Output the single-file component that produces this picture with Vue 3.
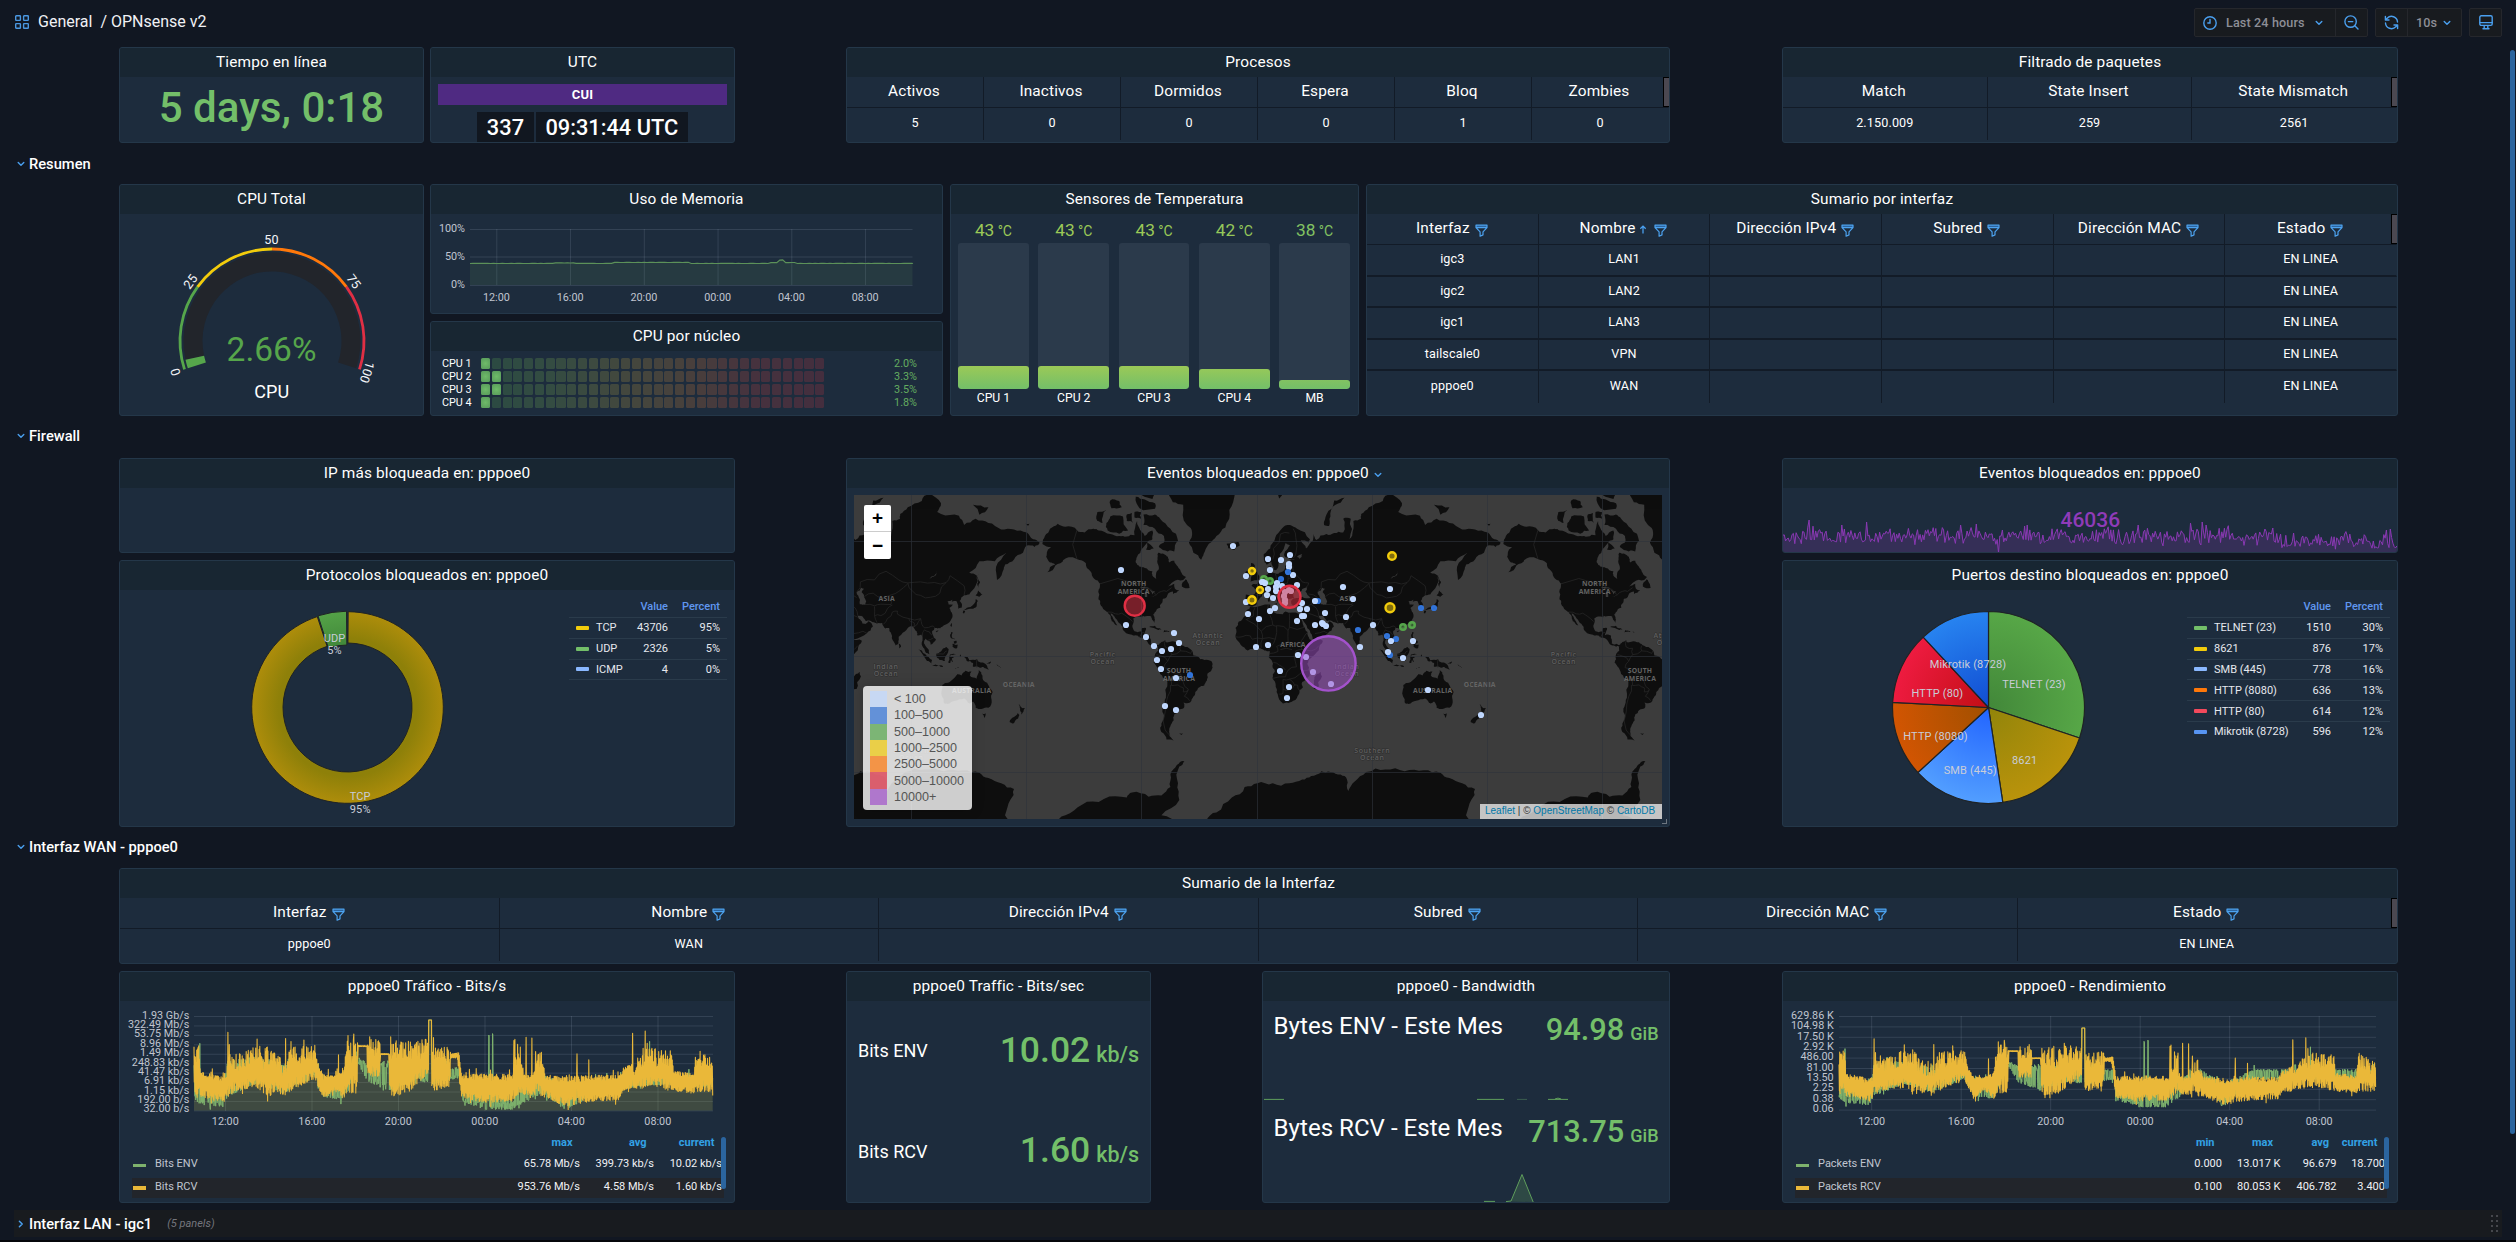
<script setup>
// Deterministic pseudo random generator so every chart renders identically
const rng = (seed) => () => {
  seed = (seed + 0x6d2b79f5) | 0
  let t = Math.imul(seed ^ (seed >>> 15), 1 | seed)
  t = (t + Math.imul(t ^ (t >>> 7), 61 | t)) ^ t
  return ((t ^ (t >>> 14)) >>> 0) / 4294967296
}
const f1 = (n) => n.toFixed(1)

/* ---------- tables ---------- */
const procesos = [['Activos', 5], ['Inactivos', 0], ['Dormidos', 0], ['Espera', 0], ['Bloq', 1], ['Zombies', 0]]
const filtrado = [['Match', '2.150.009'], ['State Insert', '259'], ['State Mismatch', '2561']]
const ifaceCols = ['Interfaz', 'Nombre', 'Dirección IPv4', 'Subred', 'Dirección MAC', 'Estado']
const ifaces = [
  ['igc3', 'LAN1', '', '', '', 'EN LINEA'],
  ['igc2', 'LAN2', '', '', '', 'EN LINEA'],
  ['igc1', 'LAN3', '', '', '', 'EN LINEA'],
  ['tailscale0', 'VPN', '', '', '', 'EN LINEA'],
  ['pppoe0', 'WAN', '', '', '', 'EN LINEA'],
]
const wanRow = ['pppoe0', 'WAN', '', '', '', 'EN LINEA']

/* ---------- arcs ---------- */
const polar = (cx, cy, r, deg) => {
  const a = (deg * Math.PI) / 180
  return [cx + r * Math.sin(a), cy - r * Math.cos(a)]
}
const slice = (cx, cy, r0, r1, a0, a1) => {
  const big = a1 - a0 > 180 ? 1 : 0
  const p = (r, a) => polar(cx, cy, r, a).map((n) => n.toFixed(2)).join(' ')
  const outer = `M${p(r1, a0)}A${r1} ${r1} 0 ${big} 1 ${p(r1, a1)}`
  return r0 ? `${outer}L${p(r0, a1)}A${r0} ${r0} 0 ${big} 0 ${p(r0, a0)}Z` : `${outer}L${cx} ${cy}Z`
}
const gaugeRing = [
  ['#56a64b', -108, -54], ['#f2cc0c', -54, 0], ['#ff780a', 0, 54], ['#e02f44', 54, 108],
].map(([c, a, b]) => ({ c, d: slice(272, 341, 90.6, 93.4, a, b) }))
const gaugeBand = slice(272, 341, 69.5, 88.5, -102.2, 108)
const gaugeValue = slice(272, 341, 69.5, 88.5, -108, -102.2)

/* ---------- memory ---------- */
const hours = ['12:00', '16:00', '20:00', '00:00', '04:00', '08:00']
const memX = (i) => 496.8 + i * 73.75
const memLine = (() => {
  const r = rng(4)
  const pts = []
  for (let x = 470; x <= 912.6; x += 2.95) {
    let y = 263.4
    if (x > 555 && x < 575) y = 262.9
    if (x > 614 && x < 690) y = 262.4
    if (x > 770 && x < 795) y = 262.6
    if (x > 778 && x < 783) y = 260
    pts.push(`${f1(x)} ${f1(y + (r() - 0.5) * 0.3)}`)
  }
  pts.push('912.5 263.2')
  return pts.join('L')
})()

/* ---------- CPU per core ---------- */
const cores = [['CPU 1', 1, '2.0%'], ['CPU 2', 2, '3.3%'], ['CPU 3', 2, '3.5%'], ['CPU 4', 1, '1.8%']]
const cellColor = (i) => {
  const stops = [[43, 74, 66], [52, 76, 66], [66, 72, 62], [72, 64, 60], [70, 50, 62], [68, 46, 62]]
  const t = (i / 31) * 5
  const k = Math.min(4, Math.floor(t))
  return `rgb(${stops[k].map((v, j) => Math.round(v + (stops[k + 1][j] - v) * (t - k))).join(',')})`
}

/* ---------- temperature ---------- */
const temps = [
  ['CPU 1', 43, 23, '#9bc957'], ['CPU 2', 43, 23, '#9bc957'], ['CPU 3', 43, 23, '#9bc957'],
  ['CPU 4', 42, 20, '#95c85a'], ['MB', 38, 9, '#82c262'],
]

/* ---------- pies ---------- */
const protoLegend = [['TCP', 43706, '95%', '#f2cc0c'], ['UDP', 2326, '5%', '#73bf69'], ['ICMP', 4, '0%', '#8ab8ff']]
const tcpPath = slice(347.5, 707.5, 64.5, 95.8, 0.4, 341.6)
const udpPath = slice(347.5, 707.5, 62.5, 96.3, 342.2, 359.4)
const ports = [
  ['TELNET (23)', 1510, '30%', '#73bf69', '#43893a', '#57a747', 2034, 684.3],
  ['8621', 876, '17%', '#f2cc0c', '#93850a', '#ba930b', 2024.7, 760.3],
  ['SMB (445)', 778, '16%', '#8ab8ff', '#2467ff', '#529eff', 1970.2, 770.3],
  ['HTTP (8080)', 636, '13%', '#ff780a', '#a35000', '#d25502', 1935.5, 736.3],
  ['HTTP (80)', 614, '12%', '#f2495c', '#c40f17', '#ee1b40', 1937.4, 693.3],
  ['Mikrotik (8728)', 596, '12%', '#5794f2', '#124fd3', '#2783f0', 1968, 664.3],
]
const portSlices = (() => {
  const total = ports.reduce((s, p) => s + p[1], 0)
  let a = 0
  return ports.map((p, i) => {
    const b = a + (p[1] / total) * 360
    const s = { d: slice(1988.5, 707.5, 0, 96, a, b), inner: p[4], outer: p[5], id: `port${i}`, text: p[0], x: p[6], y: p[7] }
    a = b
    return s
  })
})()

/* ---------- blocked events sparkline ---------- */
const events = (() => {
  const r = rng(21)
  const pts = []
  for (let i = 0; i <= 470; i++) {
    const x = 1783 + i * 1.306
    let y = 536.2 + Math.sin(i / 5) * 1.6
    if (i > 345) y += Math.min(5.5, (i - 345) / 14)
    y += (r() - 0.5) * 13 + (r() - 0.5) * 5
    if (r() > 0.95) y -= 5
    pts.push([x, y])
  }
  const peaks = { 20: 520, 45: 525, 64: 522, 136: 525, 148: 524, 165: 552.5, 187: 525, 272: 525, 321: 522, 324: 525, 462: 530, 465: 529, 469: 548, 470: 546 }
  Object.entries(peaks).forEach(([k, v]) => { pts[k][1] = v })
  return pts.map((p) => `${f1(p[0])} ${f1(p[1])}`).join('L')
})()

/* ---------- traffic charts: [position, top, bottom] envelopes ---------- */
const envRcv = [
  [0, 650, 800], [12, 645, 790], [14, 725, 800], [62, 742, 818], [68, 732, 800], [70, 650, 800], [90, 672, 780], [130, 645, 772],
  [150, 650, 800], [175, 680, 790], [184, 690, 800], [200, 650, 782], [250, 645, 745], [256, 700, 770], [268, 735, 810],
  [290, 738, 780], [308, 722, 812], [315, 630, 790], [336, 622, 790], [339, 647, 650], [357, 647, 650], [358, 628, 740], [383, 625, 740],
  [385, 671, 674], [402, 671, 674], [404, 632, 800], [440, 632, 790], [480, 628, 735], [494, 640, 785], [505, 655, 778], [528, 650, 770], [530, 672, 684], [543, 668, 684], [547, 668, 730],
  [552, 734, 805], [600, 732, 818], [660, 734, 814], [669, 650, 795], [676, 650, 785], [680, 735, 795], [700, 735, 795], [711, 660, 785], [717, 665, 805],
  [725, 735, 800], [765, 740, 830], [820, 736, 814], [878, 736, 810], [884, 716, 785], [905, 698, 785], [908, 733, 775], [926, 655, 775], [945, 655, 765],
  [987, 662, 785], [990, 722, 785], [1032, 732, 790], [1036, 655, 785], [1055, 670, 785], [1071, 690, 785],
]
const envEnv = [
  [0, 680, 808], [14, 745, 825], [60, 755, 832], [70, 690, 800], [130, 680, 760], [185, 705, 790], [250, 700, 742], [268, 738, 802], [305, 740, 810],
  [320, 690, 780], [338, 680, 700], [358, 700, 755], [404, 690, 785], [460, 702, 750], [494, 705, 765], [528, 710, 750], [547, 712, 745], [553, 755, 815],
  [600, 760, 840], [655, 760, 840], [720, 735, 790], [765, 755, 840], [830, 750, 798], [926, 735, 768], [985, 735, 765], [1071, 735, 775],
]
const packEnv = envEnv.map(([x, a, b]) => (x > 700 && x !== 765 ? [x, 710, 745] : [x, a, b]))
const spikesRcv = { 70: 607, 130: 627, 189: 626, 227: 630, 298: 675, 318: 617, 330: 612, 660: 632, 662: 628, 685: 622, 697: 624, 705: 665, 790: 672, 815: 690, 905: 610, 931: 603, 935: 640, 945: 655 }
const noisy = (env, seed, spikes, w, h, remap, dense) => {
  const r = rng(seed)
  const out = []
  const y = (v) => {
    const f = (v - 558) / 284
    return f1((remap ? 0.09 + 0.89 * f : f) * h)
  }
  let k = 0
  let up = false
  for (let i = 0; i <= 1071; i += 0.7) {
    while (k < env.length - 2 && env[k + 1][0] < i) k++
    const [x0, t0, b0] = env[k]
    const [x1, t1, b1] = env[k + 1]
    const t = Math.min(1, (i - x0) / (x1 - x0))
    const top = t0 + (t1 - t0) * t
    const bot = b0 + (b1 - b0) * t
    up = dense ? !up : r() > 0.5
    const span = bot - top
    // tall bursts keep gaps near their peaks, short ones form a solid band
    const loose = span > 95 ? 0.5 : 0.26
    let v = up ? top + span * Math.pow(r(), 1.4) * loose : bot - span * Math.pow(r(), 1.6) * 0.3
    if (span > 20 && r() > 0.97) v += up ? -18 : 14
    const hit = Object.keys(spikes).find((s) => Math.abs(s - i) < 0.36)
    if (hit) v = spikes[hit]
    if (i > 484 && i < 490) v = 570
    out.push(`${f1((i / 1071) * w)} ${y(Math.min(839, v))}`)
  }
  return 'M' + out.join('L')
}
const greenSpikes = { 12: 640, 608: 615, 609: 618, 616: 611, 617: 614, 940: 634 }
const bits = { rcv: noisy(envRcv, 7, spikesRcv, 519, 94.5, false, true), env: noisy(envEnv, 11, greenSpikes, 519, 94.5) }
const packs = { rcv: noisy(envRcv, 17, spikesRcv, 537, 94, true, true), env: noisy(packEnv, 15, greenSpikes, 537, 94, true) }
const bitLabels = ['1.93 Gb/s', '322.49 Mb/s', '53.75 Mb/s', '8.96 Mb/s', '1.49 Mb/s', '248.83 kb/s', '41.47 kb/s', '6.91 kb/s', '1.15 kb/s', '192.00 b/s', '32.00 b/s']
const packLabels = ['629.86 K', '104.98 K', '17.50 K', '2.92 K', '486.00', '81.00', '13.50', '2.25', '0.38', '0.06']

/* ---------- world map ---------- */
const project = ([lon, lat]) => {
  const l = Math.max(-84, Math.min(84, lat))
  return [403.4 + 1.28 * lon, 161 - 73.34 * Math.log(Math.tan(Math.PI / 4 + (l * Math.PI) / 360))]
}
const parse = (s) => s.trim().split(/\s+/).map((p) => p.split(',').map(Number))
const coast = rng(99)
const rough = (pts, depth) => {
  if (!depth) return pts
  const out = []
  pts.forEach((a, i) => {
    out.push(a)
    if (i === pts.length - 1) return
    const b = pts[i + 1]
    const k = (coast() - 0.5) * 0.32
    const len = Math.hypot(b[0] - a[0], b[1] - a[1])
    const c = len > 60 ? 0 : k
    out.push([(a[0] + b[0]) / 2 - (b[1] - a[1]) * c, (a[1] + b[1]) / 2 + (b[0] - a[0]) * c])
  })
  return rough(out, depth - 1)
}
const landPath = (s) => {
  const p = parse(s).map(project)
  p.push(p[0])
  return 'M' + rough(p, 2).map((q) => q.map(f1).join(' ')).join('L') + 'Z'
}
const linePath = (s) => 'M' + rough(parse(s).map(project), 1).map((q) => q.map(f1).join(' ')).join('L')
const land = [
  '-168,65.5 -166,68 -162,70 -156,71.3 -150,70.5 -141,69.6 -135,69 -128,70 -124,69.5 -115,68.5 -108,68 -102,67.8 -96,68.2 -94,72 -90,69 -88,68 -82,69.5 -82,67 -86,66 -90,64 -94,61 -95,58.8 -92,57 -88,56.5 -82,55 -82,53 -79,51.3 -79,54.5 -77,57 -78,60 -77.5,62.5 -73,62 -70,61 -69,58.8 -65,59.5 -62,57 -60,55 -56,52.5 -58,51 -66,50 -70,47.5 -65,49 -64.5,46.5 -61,45.5 -66,43.5 -66,45 -70,43.5 -71,41.7 -74,40.5 -76,37 -75.8,35.3 -79,33.5 -81.3,31 -80,27 -80.5,25.2 -82,27 -83,29.5 -85,29.8 -89.5,30 -90,29 -94,29.5 -97,28 -97.7,23 -96,19 -94,18.2 -91,18.7 -90.5,21 -87,21.4 -88,18 -88.5,16 -84,15.8 -83.3,12 -83.5,10 -81,8.9 -79.5,9.5 -77.5,8.5 -78,7.5 -80,7.3 -82.5,8.2 -85.5,10 -87.5,13 -92,14.5 -95,16 -99,16.6 -105,20 -105.5,22.5 -109,26 -112.8,30.5 -114.7,31.5 -112,27 -109.5,23 -112,25 -114.5,28 -117,32.5 -120.5,34.5 -122.5,37 -124.2,40.5 -124,46 -123,49 -127.5,51.5 -130.5,55 -134,58.5 -139,59.8 -146,60.8 -151,60 -154,58.5 -160,55.5 -164,54.6 -158,58 -162,58.8 -165,61 -164,63.2 -161,64.5',
  '-80,73.5 -76,72.5 -68,70 -62,66.5 -65,63 -70,63 -77,64.5 -73,66 -73,68 -80,70 -89,71 -89,73.5',
  '-115,73 -105,73 -101,69.5 -108,68.6 -117,69.5 -118,71.5', '-125,74 -118,74.5 -121,71.5 -125,72',
  '-95,77 -88,76.5 -80,75.8 -80,74.7 -92,74.8', '-90,80 -76,80 -76,78.5 -82,76.6 -90,77.2', '-86,66 -81,64 -87,63.6',
  '-115,76.3 -108,76.2 -106,75 -114,74.8', '-96,74 -91,74 -91,72.5 -96,72.8', '-102,73.5 -98,73.8 -97,71.5 -102,72',
  '-59,47.7 -53,46.8 -53.5,48.8 -56,51.3', '-84.5,22 -80,23 -75,20.3 -77.5,20', '-74,18.3 -72.5,19.8 -69,19.2 -69,18.4', '-67,18.4 -65.7,18.4 -65.9,18',
  '-73,78.2 -66,76 -58,75.5 -55,71 -51,69 -53.5,66 -50,62.5 -44,59.9 -42,62 -38,65.6 -32,68 -25,70.3 -22,72.5 -19,76 -19,79.5 -60,80.5',
  '-24,65.6 -20,66 -15,66.2 -13.8,65 -18,63.5 -22.5,64',
  '-77.5,8.5 -75,10.8 -72,12 -71.5,10.8 -68,11 -62,10.7 -58,8 -52,5 -50,0.5 -44.5,-2.5 -40,-2.9 -35.2,-5.5 -35,-9 -39,-13.5 -39.5,-19 -41.5,-22.5 -46,-24 -48.5,-27 -50.5,-31 -54,-34.5 -58,-34.3 -57,-37 -62,-39 -65,-41.5 -65.5,-45 -68,-48 -69,-51 -68.5,-53 -65.5,-55 -71,-54.5 -75,-51 -75,-46.5 -73.5,-41 -73.5,-37 -71.5,-31 -70.3,-20 -70.5,-18.3 -76,-14 -79,-8 -81.2,-5 -80,-2.5 -80,1 -77.5,4',
  '-9.3,38.7 -9,43.2 -2,43.5 -1.2,46 -4.6,48.3 -1.5,48.8 1.8,50.8 4.5,52.5 8.5,53.8 8.3,57 10.5,57.6 10.5,54.5 14,54 18.5,54.6 21,55.5 21.5,57.5 24,57.3 23.5,59.2 29.5,60 25,60.2 21.5,61 21.5,63 25.4,65 22,65.8 17.5,62 17,60.5 18.7,60 16.5,57.5 14.2,55.5 12.8,55.6 11,59 7,58 5,60 5,62 10,64 14,67.5 19,70 25.5,71 31,70 41,67 40,66 34,66.7 38,64 40,65 44,68.5 46,66.8 54,68.5 60,68.8 67,69 67,72.5 73,72.5 72,67 74,68 75,72 81,72.5 81,73.6 87,75 98,76.2 104,77.7 113,75.8 110,74 113,73.6 127,73.2 131,71 140,72.5 150,71.5 160,69.8 170,69.8 180,69 185,67 190,66 186,64.5 180,65 177,62.5 170,60 163,58 162,56 156.7,51 156,57 164,62.5 155,59.3 143,59.3 135,54.5 141,53 140,48 135,43.2 131,42.8 127.5,39.5 129.4,37 129,35.2 126.5,34.5 126,37.5 125,39.5 121.5,39 122,40.5 118,39 119,37.3 122.5,37.2 119.5,35 121.5,32 122,30 119.5,25.5 114,22.3 110.3,21 108,21.5 106,19 109,13 107,10.4 105,8.8 104.7,10.3 102.5,12 100.8,13.4 99.5,10 103,5.5 104,1.4 101,2.8 98.3,8 98.5,12 97.5,16.5 94.3,16 94,19 91.5,22.6 87,21.3 82,16.5 80,15 79.8,10.3 77.6,8.1 74.5,14 72.7,19 72.5,21.3 69.5,21 67,24.9 61.5,25.1 57,26.8 54,26.6 50.5,30 48,30 50.5,26.5 51.5,24.5 54,24.2 56.3,26.2 59.8,22.5 55,17.5 45,12.8 43,13.5 42.5,16.5 39,21.2 35,28 34.9,29.5 34.3,27.9 32.6,29.9 34.5,31.5 36,36.3 30.6,36.8 27.5,36.9 26.3,39.5 29,41 35,42 41.5,41.3 37.5,45 39,47.2 35,46.3 33.5,44.5 32.5,46.2 30.5,46 28,43 28.8,41 26,40.8 23.5,40.3 24,38 22.8,36.5 21,38.5 19.5,41.5 14,45 12.3,45.3 14,42.5 18.4,40 16.5,39.5 15.8,38 14.8,40.5 10.3,43.5 8.5,44.3 4,43.4 3.2,42 0,39.5 -0.5,37.6 -5.5,36.1 -8.9,37',
  '-5.8,35.8 10,37.3 11,33.8 20,31 22,32.8 32.5,31.2 32.5,29.9 35.5,24 37.3,20.8 39.5,15.5 43.2,11.5 51.2,11.9 48,4.5 41.5,-1.8 39,-6 40.6,-12 40.6,-15.5 35,-20 35.5,-24 32.7,-26 32.5,-28.5 28,-33 25.7,-34 20,-34.8 18.3,-33.5 15,-27 14.3,-22 11.8,-17 13.7,-12 12.2,-6 8.8,-0.8 9.5,4 5.5,4.3 1,6 -4,5.2 -7.7,4.4 -13,8.5 -17,14.5 -16.3,19 -17,21.5 -14.5,26 -9.8,29.8 -9.6,32 -6.5,34.5',
  '-5.5,50.2 1.3,51.2 1.6,52.8 -1.5,55 -2,57.6 -5,58.6 -6,56.5 -3,54 -5,52', '-10,52 -6.3,52.2 -6,54.5 -8,55.2 -10,54',
  '12.5,38 15.5,38.2 15,36.8', '8.3,39 9.7,39.2 9.3,42.8 8.6,41', '23.6,35.3 26.2,35.2 24.7,34.9', '32.4,35 34.4,35.5 33.5,34.7',
  '52,71 56,70.7 57,73 61,75.5 68,76.8 60,76.3 54,73.5', '11,79 17,76.7 26,78.5 20,80.3', '95,79 105,78.5 99,79.8', '138,75.5 150,75 143,73.4', '179,71.3 182,71.3 181,70.8',
  '142,54 143.5,50 142.5,46.5 142,50', '140,42.5 142,45.4 145.3,43.3 143,42', '130.9,34 136,35.7 140,40.5 141.8,39.5 140.8,36 137,34.6 132,33.8', '130,33.3 131.8,33 131,31.3 130,32',
  '120.2,23 121.7,25.2 121,22', '108.8,19.2 111,19.8 109.8,18.3', '120,16 120.8,18.4 122.2,18 121.5,14.5 124,12.8 120.6,14', '122,9.5 122,7 125.5,6 126.3,8.8 124,8.7', '123,11.5 125,11.8 125.2,10.3 123,9.5',
  '109.3,1.8 113,3.4 117,7 119,5 117.5,1 116,-3.8 112,-3.2 110,-1.3', '95.3,5.6 98,4.2 103.5,-1 106,-3.2 105.5,-5.8 102,-4', '105.3,-6.7 108.7,-6.6 114.4,-7.8 114.3,-8.6 108,-7.7',
  '119.5,-3 119,-5.5 120.4,-5 120.8,-2.8 122.5,-4.8 121.5,-1.8 123,-0.9 120.3,-0.7 120.5,0.8 125,1.5 120,1.2', '131,-0.8 134,-1 135,-3.3 141,-2.6 147.5,-6 150.5,-10.5 146,-8.5 143,-9 138,-8.3 138,-5.5 133,-4',
  '124,-10.2 127,-8.5 125,-9.3', '127.6,0 128.5,1.5 128,-0.8', '148.5,-5.6 152,-4.3 151,-6', '156,-6.5 160,-9 158,-8', '164,-20.2 167,-22.3 165,-21.5',
  '114,-22 117,-20.7 122,-18 126,-14 129,-15 132,-11.5 136.7,-12 135.5,-15 140.8,-17.5 142.5,-10.8 145.3,-15 146.3,-19 150.5,-23 153.3,-27 152.5,-32.5 150,-37.5 144.5,-38.3 140,-37.5 138,-33.5 135.5,-34.8 131,-31.5 124,-33 118,-35 115,-34 113.5,-26',
  '145,-41 148.3,-41 147,-43.5', '173,-34.8 175.5,-37 178.5,-37.8 176,-41.5 174.8,-39 174.5,-37', '172.7,-40.8 174.2,-41.8 171,-45 169,-46.6 166.6,-45.8 170,-43',
  '49.3,-12.2 50.4,-15.7 47,-25 44,-24.5 44.3,-20 44.5,-16.3', '80,9.7 81.8,7.5 80.5,6', '-61,-51.6 -58,-51.5 -59,-52.3',
  '-180,-79.5 -158,-78.8 -150,-77 -137,-75 -120,-73.8 -102,-73.5 -98,-72.3 -85,-73.3 -75,-73 -68,-71 -68,-67.5 -63,-64.5 -57,-63.2 -61,-65 -62,-70 -61,-74 -75,-77 -60,-78.5 -40,-78 -32,-76.5 -20,-73.5 -10,-71 0,-70 12,-70 25,-70 35,-69 42,-68 50,-66.5 57,-66.8 65,-67.5 70,-69 71,-72 76,-69.5 85,-66.8 100,-66 115,-66.5 130,-66.2 143,-67 150,-68.5 160,-70 170,-71.5 167,-74 163,-77 168,-79 180,-80 180,-84 -180,-84',
].map(landPath).join('')
const lakes = ['47,44.5 50.5,47 53,46.5 51,44.5 53.5,41 54,37 49.5,37.5 49.5,40.5', '-92,46.8 -85,47 -84,46 -88,46.5', '-88,42 -86,42 -85,45.8 -87,45', '-84,45.8 -80,44.8 -82.3,43.3', '-83,41.8 -79,42.8 -81,42.3', '32,0.3 34,0.3 33,-2.5', '104,51.5 109.5,55.5 108.5,53', '31,61 35,62 33,60.2'].map(landPath).join('')
const borders = [
  '-123,49 -95,49 -89,48 -83,46 -79,43 -75,45 -71,45 -67,47', '-141,69.6 -141,60.2', '-117,32.5 -111,31.3 -106,31.7 -102,29.5 -97.5,26', '-92,14.6 -90,17.8 -88.5,18',
  '-79,1 -75,0 -70,-4 -73,-9 -69,-11 -69,-17.5 -70,-18.5', '-67,1 -60,4 -60,8', '-72,12 -72,7 -67,6 -67,1 -70,-4', '-69,-11 -60,-14 -58,-20 -54,-25 -57,-30 -53,-33', '-68,-22 -70,-30 -72,-40 -72,-50 -68.5,-52.5', '-69,-17.5 -67,-22.5 -62,-22 -58,-24 -58,-27 -54,-26', '-60,4 -52,2 -51,4',
  '-8.7,27.7 -8.7,27.3 -3,30 -2,35', '-8.7,27.3 3,19 12,23.5 10,30 8.5,33 8.5,37', '25,31.5 25,22 37,22', '12,23.5 16,23 24,19.5 25,22', '24,19.5 24,11 34,10 36,14 39,18', '15,23 14,13 4,13.5 3,19', '-17,14.8 -12,14.8 -5.5,15.5 -4,13 4,13.5 3,6.5', '14,13 10,7 9,4.5', '24,11 15,7.5 16,3.5 9.5,2', '34,10 35,5 42,4 48,8', '35,5 30,4 29.5,-4 30.5,-8.5 24,-11 22,-16 12,-17.2', '27,5 18,5', '12.5,-5 17,-7 22,-11', '41.5,-1.8 34,1 29.5,-1', '40.5,-10.7 35,-11.5 33,-14 25,-17.8 20,-18 20,-28 17,-28.5', '25,-17.8 29,-22 31.5,-22.3 33,-26', '20,-25 25,-25.7 29,-22',
  '28,70 30,67.5 30,62 28,60.5', '12,60 12.5,64 18,68.5 25,68.8', '27.5,57.5 28,55 31,53 24,51.5 24,54 21,55.3', '14,54 15,51 19,49.5 23,49 24,51.5', '28,45.5 22,48 16,48 13,46.5 7,46 8,48.5 6,50', '-1.5,43.4 3,42.4', '-7,37.2 -7,42', '31,53 35,50 40,49.5 38,47.2', '40,43.5 47,41.5', '36,36.3 42,37.3 44.5,39.8 42.5,41.5', '42,37.3 46,35 48,30', '36,33 39,32.5 42,31 48,29', '45,17.3 52,19 55,17.5', '47,44.5 50,50 61,51 70,55 80,51 87,49.5 97,50 108,49.7 117,49.7 120,53 131,48 131,43', '87,49.5 91,45 97,42.7 105,41.7 112,44 117,49.7', '53,42 60,44 68,41 74,43 80,45 87,49', '54,37.2 61,36.5 66,37.5 74,37.3 74,40', '61,36 61,30 63,25.2', '61,30 66,30 71,34.5 75,37', '68,24 71,28 75,32.5 79,33 79,31 88,28 97,28 98,24 100,21.5 106,22.8 108,21.6', '88,28 89,26 92,25 92,22', '97,28 94,23.5 92,22', '98.5,12 98.7,18 100,20 104,18.5 106,16', '102.5,12 107,14', '141,-2.6 141,-9', '109.5,1.5 115,1.5 117.5,4',
].map(linePath).join('')
const mapLabels = [
  ['NORTH', 279.7, 89], ['AMERICA', 279.7, 96.6], ['SOUTH', 325, 176], ['AMERICA', 325, 184], ['ASIA', 493.7, 104], ['AFRICA', 439, 150], ['OCEANIA', 625.7, 190], ['AUSTRALIA', 578.7, 195.3],
]
const seaLabels = [['Pacific', 248.7, 159.3], ['Ocean', 248.7, 166.3], ['Atlantic', 354, 141], ['Ocean', 354, 148], ['Indian', 493, 172], ['Ocean', 493, 178.7], ['Southern', 518.3, 255.3], ['Ocean', 518.3, 262.3]]
const W = '#c0d8ff', B = '#3274d9', G = '#56a64b', Y = '#f2cc0c'
const dots = [
  ...[[431, 97], [430, 101], [431, 105], [431, 108], [435, 95], [437, 96]].map((p) => [...p, 1.7, W]),
  ...[[379, 51], [414, 64], [427, 65], [436, 60], [416, 75], [435, 69], [435, 72], [439, 80], [392, 81]].map((p) => [...p, 1.7, W]),
  ...[[434, 77], [427, 84], [464, 106], [504, 135], [567, 113], [580, 113], [533, 141], [542, 144], [536, 160], [336, 180]].map((p) => [...p, 1.7, B]),
  [410, 84, 2.8, G], [416, 86, 2.8, G], [549, 132, 2.8, G], [558, 130, 2.8, G],
  ...[[409, 87], [408, 87], [411, 88], [414, 94], [413, 100], [419, 103], [423, 88], [422, 92], [422, 96], [428, 91], [443, 90], [448, 108], [461, 106], [446, 114], [453, 114], [448, 121], [450, 121], [443, 126], [471, 118], [461, 130], [468, 128], [469, 129], [472, 131], [492, 122], [519, 130], [506, 152], [489, 92], [499, 104], [536, 94], [392, 107], [394, 119], [405, 124], [416, 116], [421, 113], [402, 152], [414, 150], [444, 160], [452, 162], [459, 177], [477, 189], [426, 176], [435, 192], [433, 203], [537, 146], [534, 157], [549, 163], [559, 146], [574, 195], [627, 220], [267, 75], [272, 130], [292, 142], [300, 151], [308, 156], [317, 154], [325, 148], [320, 138], [303, 165], [307, 174], [322, 183], [311, 211], [322, 215]].map((p) => [...p, 1.7, W]),
  [398, 76, 3, Y], [406, 95, 3, Y], [398, 105, 3.7, Y], [538, 61, 3.8, Y], [536, 112.7, 4.5, Y],
  [280.7, 110.7, 10, '#e02f44'], [435.5, 101.8, 11, '#e02f44'], [474.4, 168.4, 27.2, '#a352cc'],
]
const mapLegend = [['< 100', '#c0d8ff'], ['100–500', '#3274d9'], ['500–1000', '#56a64b'], ['1000–2500', '#f2cc0c'], ['2500–5000', '#ff780a'], ['5000–10000', '#e02f44'], ['10000+', '#a352cc']]
</script>

<template>
  <div class="page">
    <header class="topbar">
      <div class="crumbs">
        <svg width="14" height="14" viewBox="0 0 14 14" fill="none" stroke="#4a97e0" stroke-width="1.4">
          <rect x=".7" y=".7" width="4.7" height="4.7" rx=".6" /><rect x="8.6" y=".7" width="4.7" height="4.7" rx=".6" />
          <rect x=".7" y="8.6" width="4.7" height="4.7" rx=".6" /><rect x="8.6" y="8.6" width="4.7" height="4.7" rx=".6" />
        </svg>
        <span class="crumb first">General</span><span class="crumb sep">/</span><span class="crumb">OPNsense v2</span>
      </div>
      <div class="tools">
        <div class="group">
          <div class="btn range">
            <svg width="14" height="14" viewBox="0 0 14 14" fill="none" stroke="#4a9fee" stroke-width="1.4" stroke-linecap="round"><circle cx="7" cy="7" r="6.2" /><path d="M7 3.4V7H4.8" /></svg>
            <span>Last 24 hours</span>
            <svg class="down" width="8" height="6" viewBox="0 0 8 6"><path d="M1.2 1.4 4 4.2l2.8-2.8" /></svg>
          </div>
          <div class="btn zoomout">
            <svg width="15" height="15" viewBox="0 0 15 15" fill="none" stroke="#4a9fee" stroke-width="1.4" stroke-linecap="round"><circle cx="6.6" cy="6.6" r="5.7" /><path d="M4.4 6.6h4.4M10.8 10.8l3.2 3.2" /></svg>
          </div>
        </div>
        <div class="group">
          <div class="btn refresh">
            <svg width="15" height="15" viewBox="0 0 15 15" fill="none" stroke="#4a9fee" stroke-width="1.4" stroke-linecap="round" stroke-linejoin="round"><path d="M13.5 7A6 6 0 0 0 3.2 3.2L1.4 5M1.4 1.4V5H5M1.5 8a6 6 0 0 0 10.3 3.8l1.8-1.8M13.6 13.6V10H10" /></svg>
          </div>
          <div class="btn every"><span>10s</span><svg class="down" width="8" height="6" viewBox="0 0 8 6"><path d="M1.2 1.4 4 4.2l2.8-2.8" /></svg></div>
        </div>
        <div class="group">
          <div class="btn tv">
            <svg width="14" height="15" viewBox="0 0 14 15" fill="none" stroke="#4a9fee" stroke-width="1.4" stroke-linecap="round" stroke-linejoin="round"><rect x=".8" y=".8" width="12.4" height="9.6" rx="1.4" /><path d="M.8 7.6h12.4M5.2 10.6v3M8.8 10.6v3M4 13.8h6" /></svg>
          </div>
        </div>
      </div>
    </header>

    <section class="row h96">
      <div class="panel w305">
        <h2>Tiempo en línea</h2>
        <div class="body center"><span class="uptime">5 days, 0:18</span></div>
      </div>
      <div class="panel w305 g6">
        <h2>UTC</h2>
        <div class="body utc">
          <div class="cui">CUI</div>
          <div class="clock"><span>337</span><span>09:31:44 UTC</span></div>
        </div>
      </div>
      <div class="panel w824 g111">
        <h2>Procesos</h2>
        <div class="body table c6">
          <div v-for="p in procesos" :key="p[0]" class="th">{{ p[0] }}</div>
          <div v-for="p in procesos" :key="p[0]" class="td">{{ p[1] }}</div>
          <i class="thumb"></i>
        </div>
      </div>
      <div class="panel w616 g112">
        <h2>Filtrado de paquetes</h2>
        <div class="body table c3">
          <div v-for="p in filtrado" :key="p[0]" class="th">{{ p[0] }}</div>
          <div v-for="p in filtrado" :key="p[0]" class="td">{{ p[1] }}</div>
          <i class="thumb"></i>
        </div>
      </div>
    </section>

    <div class="rowhead h41"><svg class="down" width="8" height="6" viewBox="0 0 8 6"><path d="M1.2 1.4 4 4.2l2.8-2.8" /></svg>Resumen</div>

    <section class="row h232">
      <div class="panel w305">
        <h2>CPU Total</h2>
        <svg class="plot" viewBox="120 214 303 201">
          <path :d="gaugeBand" fill="#22252b" />
          <path :d="gaugeValue" fill="#56a64b" />
          <path v-for="g in gaugeRing" :key="g.c" :d="g.d" :fill="g.c" />
          <g class="glabel" text-anchor="middle">
            <text dy=".35em" transform="translate(175.5 372) rotate(-108)">0</text>
            <text dy=".35em" transform="translate(190.5 281.5) rotate(-54)">25</text>
            <text dy=".35em" x="271.5" y="240">50</text>
            <text dy=".35em" transform="translate(353.8 281.5) rotate(54)">75</text>
            <text dy=".35em" transform="translate(367 372.5) rotate(108)">100</text>
          </g>
          <text class="gval" x="271.5" y="349.3" dy=".35em" text-anchor="middle">2.66%</text>
          <text class="gname" x="271.7" y="391.7" dy=".35em" text-anchor="middle">CPU</text>
        </svg>
      </div>
      <div class="col w513 g6">
        <div class="panel h130">
          <h2>Uso de Memoria</h2>
          <svg class="plot" viewBox="431 214 511 99">
            <g class="axis">
              <path d="M470 229.5H912.5M470 257H912.5M470 285.5H912.5" />
              <path v-for="(h, i) in hours" :key="h" :d="`M${memX(i)} 229V285`" />
            </g>
            <path :d="`M${memLine}V285H470Z`" fill="#73bf69" opacity=".1" />
            <path :d="`M${memLine}`" fill="none" stroke="#5c9159" stroke-width="1.2" />
            <g class="tick" text-anchor="end">
              <text x="465" y="228.3" dy=".35em">100%</text><text x="465" y="256.3" dy=".35em">50%</text><text x="465" y="284.3" dy=".35em">0%</text>
            </g>
            <text v-for="(h, i) in hours" :key="h" class="tick" text-anchor="middle" :x="memX(i) - 0.4" y="297" dy=".35em">{{ h }}</text>
          </svg>
        </div>
        <div class="panel h95">
          <h2>CPU por núcleo</h2>
          <div class="body cores">
            <div v-for="c in cores" :key="c[0]" class="core">
              <span class="cname">{{ c[0] }}</span>
              <i v-for="i in 32" :key="i" :class="{ lit: i <= c[1] }" :style="i > c[1] ? { background: cellColor(i - 1) } : null"></i>
              <span class="cval">{{ c[2] }}</span>
            </div>
          </div>
        </div>
      </div>
      <div class="panel w409 g7">
        <h2>Sensores de Temperatura</h2>
        <div class="body temps">
          <div v-for="t in temps" :key="t[0]" class="temp">
            <div class="tval" :style="{ color: t[3] }">{{ t[1] }} <small>°C</small></div>
            <div class="tbar"><i :style="{ height: t[2] + 'px', background: `linear-gradient(0deg, #73bf69, ${t[3]})` }"></i></div>
            <div class="tname">{{ t[0] }}</div>
          </div>
        </div>
      </div>
      <div class="panel w1032 g7">
        <h2>Sumario por interfaz</h2>
        <div class="body table c6">
          <div v-for="c in ifaceCols" :key="c" class="th">{{ c }}<svg v-if="c === 'Nombre'" class="sort" width="8" height="9" viewBox="0 0 8 9"><path d="M4 8.4V1.2M1.3 3.8 4 1.1l2.7 2.7" fill="none" stroke="#4a9fee" stroke-width="1.3" /></svg><svg class="filter" width="13" height="13" viewBox="0 0 13 13"><path d="M1 1.2h11v2.4H1z" fill="#2c659f" /><path d="M1 1.1h11v2.5L8 7.8v3.1l-2.9 1.3V7.8L1 3.6zM1.4 3.7h10.2" /></svg></div>
          <template v-for="(r, k) in ifaces" :key="r[0]">
            <div v-for="(v, i) in r" :key="i" class="td" :class="{ line: k < 4 }">{{ v }}</div>
          </template>
          <i class="thumb"></i>
        </div>
      </div>
    </section>

    <div class="rowhead h42"><svg class="down" width="8" height="6" viewBox="0 0 8 6"><path d="M1.2 1.4 4 4.2l2.8-2.8" /></svg>Firewall</div>

    <section class="row h369">
      <div class="col w616b">
        <div class="panel h95"><h2>IP más bloqueada en: pppoe0</h2></div>
        <div class="panel h267">
          <h2>Protocolos bloqueados en: pppoe0</h2>
          <div class="body pie">
            <svg width="449" height="236" viewBox="120 590 449 236">
              <defs>
                <radialGradient id="tcp" gradientUnits="userSpaceOnUse" cx="347.5" cy="707.5" r="96"><stop offset=".72" stop-color="#8e8009" /><stop offset="1" stop-color="#ae8d0b" /></radialGradient>
                <radialGradient id="udp" gradientUnits="userSpaceOnUse" cx="347.5" cy="707.5" r="96"><stop offset=".66" stop-color="#42893b" /><stop offset="1" stop-color="#54a247" /></radialGradient>
              </defs>
              <path :d="tcpPath" fill="url(#tcp)" stroke="#1f2325" />
              <path :d="udpPath" fill="url(#udp)" stroke="#1f2325" />
              <g class="plabel" text-anchor="middle">
                <text x="334.5" y="638.3" dy=".35em">UDP</text><text x="334.5" y="650.3" dy=".35em">5%</text>
                <text x="360.2" y="796.3" dy=".35em">TCP</text><text x="360.2" y="809.3" dy=".35em">95%</text>
              </g>
            </svg>
            <div class="legend w158">
              <div class="lrow lhead"><span></span><b>Value</b><b class="pct">Percent</b></div>
              <div v-for="p in protoLegend" :key="p[0]" class="lrow last"><i :style="{ background: p[3] }"></i><span>{{ p[0] }}</span><em>{{ p[1] }}</em><em class="pct">{{ p[2] }}</em></div>
            </div>
          </div>
        </div>
      </div>

      <div class="panel w824 g111">
        <h2><span class="menu">Eventos bloqueados en: pppoe0<svg class="down" width="8" height="6" viewBox="0 0 8 6"><path d="M1.2 1.4 4 4.2l2.8-2.8" /></svg></span></h2>
        <div class="body mapbody">
          <div class="map">
            <svg width="808" height="324" viewBox="0 0 808 324">
              <rect width="808" height="324" fill="#3c3c3c" />
              <g v-for="o in [-461, 0, 461]" :key="o" :transform="`translate(${o} 0)`">
                <path :d="land" fill="#0e0e0e" fill-rule="nonzero" />
                <path :d="lakes" fill="#3c3c3c" />
                <path :d="borders" fill="none" stroke="#262626" stroke-width=".8" />
                <text v-for="(l, i) in mapLabels" :key="i" class="mlabel" text-anchor="middle" :x="l[1]" :y="l[2]" dy=".35em">{{ l[0] }}</text>
                <text v-for="(l, i) in seaLabels" :key="'s' + i" class="slabel" text-anchor="middle" :x="l[1]" :y="l[2]" dy=".35em">{{ l[0] }}</text>
              </g>
              <path d="M57.5 0V324M172.5 0V324M287.5 0V324M403.5 0V324M518.5 0V324M633.5 0V324M748.5 0V324M0 46.5H808M0 161.5H808M0 277.5H808" stroke="#2e343b" stroke-width=".8" opacity=".8" />
              <circle v-for="(d, i) in dots" :key="i" :cx="d[0]" :cy="d[1]" :r="d[2]" :fill="d[3]" fill-opacity=".5" :stroke="d[3]" :stroke-width="d[2] < 2 ? 2.8 : 2.4" />
            </svg>
            <div class="zoomctl"><span>+</span><span>−</span></div>
            <div class="mlegend"><div v-for="l in mapLegend" :key="l[0]"><i :style="{ background: l[1] }"></i>{{ l[0] }}</div></div>
            <div class="attrib"><a>Leaflet</a> | © <a>OpenStreetMap</a> © <a>CartoDB</a></div>
          </div>
          <i class="resize"></i>
        </div>
      </div>

      <div class="col w616 g112">
        <div class="panel h95">
          <h2>Eventos bloqueados en: pppoe0</h2>
          <svg class="plot" viewBox="1783 488 614 64">
            <path :d="`M${events}V553H1783Z`" fill="#8f3bb8" opacity=".22" />
            <path :d="`M${events}`" fill="none" stroke="#8a39b3" stroke-width="1" />
            <text class="evcount" x="2090.3" y="520" dy=".35em" text-anchor="middle">46036</text>
          </svg>
        </div>
        <div class="panel h267">
          <h2>Puertos destino bloqueados en: pppoe0</h2>
          <div class="body pie">
            <svg width="404" height="236" viewBox="1783 590 404 236">
              <defs>
                <radialGradient v-for="s in portSlices" :id="s.id" :key="s.id" gradientUnits="userSpaceOnUse" cx="1988.5" cy="707.5" r="96"><stop offset=".05" :stop-color="s.inner" /><stop offset="1" :stop-color="s.outer" /></radialGradient>
              </defs>
              <path v-for="s in portSlices" :key="s.id" :d="s.d" :fill="`url(#${s.id})`" stroke="#1f2325" stroke-width="1.2" stroke-linejoin="round" />
              <text v-for="s in portSlices" :key="s.id" class="plabel" text-anchor="middle" :x="s.x" :y="s.y" dy=".35em">{{ s.text }}</text>
            </svg>
            <div class="legend w203">
              <div class="lrow lhead"><span></span><b>Value</b><b class="pct wide">Percent</b></div>
              <div v-for="p in ports" :key="p[0]" class="lrow"><i :style="{ background: p[3] }"></i><span>{{ p[0] }}</span><em>{{ p[1] }}</em><em class="pct wide">{{ p[2] }}</em></div>
            </div>
          </div>
        </div>
      </div>
    </section>

    <div class="rowhead h41 wan"><svg class="down" width="8" height="6" viewBox="0 0 8 6"><path d="M1.2 1.4 4 4.2l2.8-2.8" /></svg>Interfaz WAN - pppoe0</div>

    <section class="row h96">
      <div class="panel w2279">
        <h2>Sumario de la Interfaz</h2>
        <div class="body table c6">
          <div v-for="c in ifaceCols" :key="c" class="th">{{ c }}<svg class="filter" width="13" height="13" viewBox="0 0 13 13"><path d="M1 1.2h11v2.4H1z" fill="#2c659f" /><path d="M1 1.1h11v2.5L8 7.8v3.1l-2.9 1.3V7.8L1 3.6zM1.4 3.7h10.2" /></svg></div>
          <div v-for="(v, i) in wanRow" :key="i" class="td">{{ v }}</div>
          <i class="thumb"></i>
        </div>
      </div>
    </section>

    <section class="row h232 t7">
      <div class="panel w616b">
        <h2>pppoe0 Tráfico - Bits/s</h2>
        <svg class="chart" width="614" height="128" viewBox="120 1001 614 128">
          <g class="axis">
            <path v-for="i in 11" :key="i" :d="`M194 ${1016.5 + (i - 1) * 9.44}H713`" />
            <path v-for="i in 6" :key="'v' + i" :d="`M${225.5 + (i - 1) * 86.5} 1016V1111`" />
          </g>
          <g transform="translate(194 1016)" fill="none" stroke-width="1" stroke-linejoin="round">
            <path :d="bits.env + 'V94.5H0Z'" fill="#7eb26d" opacity=".12" />
            <path :d="bits.rcv + 'V94.5H0Z'" fill="#eab839" opacity=".12" />
            <path :d="bits.env" stroke="#7eb26d" />
            <path :d="bits.rcv" stroke="#eab839" stroke-width="1.1" />
          </g>
          <text v-for="(l, i) in bitLabels" :key="l" class="tick" text-anchor="end" x="189.3" :y="1015 + i * 9.35" dy=".35em">{{ l }}</text>
          <text v-for="(h, i) in hours" :key="h" class="tick" text-anchor="middle" :x="225.3 + i * 86.5" y="1121.3" dy=".35em">{{ h }}</text>
        </svg>
        <div class="glegend">
          <div class="grow ghead"><span></span><b class="v1">max</b><b class="v2">avg</b><b class="v3">current</b></div>
          <div class="grow"><i class="env"></i><span>Bits ENV</span><em class="v1">65.78 Mb/s</em><em class="v2">399.73 kb/s</em><em class="v3">10.02 kb/s</em></div>
          <div class="grow alt"><i class="rcv"></i><span>Bits RCV</span><em class="v1">953.76 Mb/s</em><em class="v2">4.58 Mb/s</em><em class="v3">1.60 kb/s</em></div>
          <i class="gscroll"></i>
        </div>
      </div>

      <div class="panel w305 g111">
        <h2>pppoe0 Traffic - Bits/sec</h2>
        <div class="body stats">
          <div class="stat"><span>Bits ENV</span><strong>10.02<small>kb/s</small></strong></div>
          <div class="stat"><span>Bits RCV</span><strong>1.60<small>kb/s</small></strong></div>
        </div>
      </div>

      <div class="panel w408 g111">
        <h2>pppoe0 - Bandwidth</h2>
        <svg class="plot" viewBox="1263 1001 406 201">
          <path d="M1264 1099.4H1284M1477 1099.4H1504M1548 1099.4H1568M1484 1201.4H1495" stroke="#5f9e5c" />
          <path d="M1517 1099.4H1527" stroke="#3b5f50" />
          <path d="M1555 1099l3-.9 3 .9" fill="none" stroke="#5f9e5c" />
          <path d="M1506 1201.6L1511 1201L1522 1174.5L1533.2 1202" fill="#73bf69" fill-opacity=".2" stroke="#5f9e5c" />
          <text class="bname" x="1273.6" y="1034">Bytes ENV - Este Mes</text>
          <text class="bval" x="1658.5" y="1039.8" text-anchor="end">94.98<tspan class="bunit" dx="6">GiB</tspan></text>
          <text class="bname" x="1273.6" y="1136">Bytes RCV - Este Mes</text>
          <text class="bval" x="1658.5" y="1141.8" text-anchor="end">713.75<tspan class="bunit" dx="6">GiB</tspan></text>
        </svg>
      </div>

      <div class="panel w616 g112">
        <h2>pppoe0 - Rendimiento</h2>
        <svg class="chart" width="614" height="128" viewBox="1783 1001 614 128">
          <g class="axis">
            <path v-for="i in 10" :key="i" :d="`M1839 ${1016.5 + (i - 1) * 10.4}H2376`" />
            <path v-for="i in 6" :key="'v' + i" :d="`M${1871.7 + (i - 1) * 89.5} 1016V1110`" />
          </g>
          <g transform="translate(1839 1016)" fill="none" stroke-width="1" stroke-linejoin="round">
            <path :d="packs.env" stroke="#7eb26d" />
            <path :d="packs.rcv" stroke="#eab839" stroke-width="1.1" />
          </g>
          <text v-for="(l, i) in packLabels" :key="l" class="tick" text-anchor="end" x="1833.7" :y="1015.2 + i * 10.35" dy=".35em">{{ l }}</text>
          <text v-for="(h, i) in hours" :key="h" class="tick" text-anchor="middle" :x="1871.7 + i * 89.5" y="1121.3" dy=".35em">{{ h }}</text>
        </svg>
        <div class="glegend four">
          <div class="grow ghead"><span></span><b class="v0">min</b><b class="v1">max</b><b class="v2">avg</b><b class="v3">current</b></div>
          <div class="grow"><i class="env"></i><span>Packets ENV</span><em class="v0">0.000</em><em class="v1">13.017 K</em><em class="v2">96.679</em><em class="v3">18.700</em></div>
          <div class="grow alt"><i class="rcv"></i><span>Packets RCV</span><em class="v0">0.100</em><em class="v1">80.053 K</em><em class="v2">406.782</em><em class="v3">3.400</em></div>
          <i class="gscroll"></i>
        </div>
      </div>
    </section>

    <div class="collapsed">
      <svg width="6" height="8" viewBox="0 0 6 8"><path d="M1.4 1.2 4.2 4 1.4 6.8" fill="none" stroke="#4a9fee" stroke-width="1.5" stroke-linecap="round" stroke-linejoin="round" /></svg>
      <span>Interfaz LAN - igc1</span><em>(5 panels)</em>
      <div class="grip"><i v-for="i in 8" :key="i"></i></div>
    </div>
    <div class="edge"></div>
    <div class="pagescroll"></div>
  </div>
</template>

<style>
html, body { background: #111722; }
</style>

<style scoped>
.page { position: relative; width: 2516px; height: 1242px; overflow: hidden; background: #111722; color: #fff; font-family: Roboto, "Liberation Sans", sans-serif; font-size: 12.6px; letter-spacing: .01071em; display: flex; flex-direction: column; }
.page * { box-sizing: border-box; }
svg { display: block; flex: none; }
em { font-style: normal; }
.down path { fill: none; stroke: #4a9fee; stroke-width: 1.4; stroke-linecap: round; stroke-linejoin: round; }

.topbar { height: 47px; flex: none; display: flex; justify-content: space-between; align-items: flex-start; padding: 8px 14px 0 15px; }
.crumbs { display: flex; align-items: center; height: 28px; font-size: 16px; letter-spacing: 0; color: #f0f1f5; }
.crumb { padding-bottom: 1px; }
.crumb.first { margin-left: 9px; }
.crumb.sep { margin: 0 4px 0 8px; }
.tools { display: flex; gap: 7px; }
.group { display: flex; height: 29px; background: #181b1f; border: 1px solid #25272c; border-radius: 2px; }
.btn { display: flex; align-items: center; color: #8d8e96; font-size: 12.6px; font-weight: 500; }
.btn + .btn { border-left: 1px solid #25272c; }
.range { width: 140px; padding-left: 8px; }
.range span { margin-left: 9px; width: 89px; white-space: nowrap; }
.zoomout { width: 32px; justify-content: center; }
.refresh { width: 31px; justify-content: center; }
.every { width: 54px; padding-left: 8px; }
.every span { width: 27px; }
.tv { width: 31px; justify-content: center; }

.row { display: flex; flex: none; padding-left: 119px; }
.col { display: flex; flex-direction: column; flex: none; justify-content: space-between; }
.panel { flex: none; display: flex; flex-direction: column; background: #1d2c3d; border: 1px solid #243749; border-radius: 3px; overflow: hidden; min-height: 0; }
.panel h2 { margin: 0; height: 29px; flex: none; display: flex; align-items: center; justify-content: center; padding-bottom: 2px; background: #182632; font-size: 15.4px; font-weight: 400; color: #fff; }
.body { flex: 1; min-height: 0; position: relative; }
.plot { flex: 1; width: 100%; min-height: 0; }
.h96 { height: 96px; } .h232 { height: 232px; } .h369 { height: 369px; } .h95 { height: 95px; } .h130 { height: 130px; } .h267 { height: 267px; }
.h41 { height: 41px; } .h42 { height: 42px; } .t7 { margin-top: 7px; }
.w305 { width: 305px; } .w824 { width: 824px; } .w616, .w616b { width: 616px; } .w513 { width: 513px; } .w409 { width: 409px; } .w408 { width: 408px; } .w1032 { width: 1032px; } .w2279 { width: 2279px; }
.g6 { margin-left: 6px; } .g7 { margin-left: 7px; } .g111 { margin-left: 111px; } .g112 { margin-left: 112px; }

.rowhead { flex: none; display: flex; align-items: center; gap: 4px; padding: 0 0 0 17px; font-size: 14.7px; font-weight: 500; letter-spacing: 0; color: #fff; }
.rowhead.h42, .rowhead.wan { padding-bottom: 2px; }

.center { display: flex; align-items: center; justify-content: center; }
.uptime { font-size: 42.1px; font-weight: 500; color: #73bf69; letter-spacing: 0; padding-bottom: 2px; line-height: 1; }
.utc { padding: 7px 7px 0; display: flex; flex-direction: column; align-items: center; }
.cui { width: 289px; height: 22px; background: #4f2a82; font-weight: 700; font-size: 13px; display: flex; align-items: center; justify-content: center; }
.clock { display: flex; gap: 2px; margin-top: 7px; font-size: 21.8px; font-weight: 500; letter-spacing: 0; }
.clock span { height: 30px; background: #111720; padding: 0 9.7px; display: flex; align-items: center; }

.table { display: grid; align-content: start; grid-template-rows: 31px; grid-auto-rows: 31.5px; }
.c6 { grid-template-columns: repeat(6, 1fr); }
.c3 { grid-template-columns: repeat(3, 1fr); }
.th, .td { display: flex; align-items: center; justify-content: center; border-right: 1px solid #121b27; padding-bottom: 2px; }
.th { font-size: 15.4px; border-bottom: 1px solid #121b27; padding-right: 2px; }
.td.line { border-bottom: 2px solid #121b27; padding-bottom: 2px; }
.c6 > :nth-child(6n), .c3 > :nth-child(3n) { border-right-color: transparent; }
.filter { margin: 4px -1px 0 5px; fill: none; stroke: #4da3f0; stroke-width: 1.2; stroke-linejoin: round; }
.filter path:first-child { stroke: none; }
.sort { margin: 3px 2px 0 4px; }
.thumb { position: absolute; right: 0; top: 0; width: 6px; height: 30px; background: #4b4851; border: 1px solid #000; border-right: 0; }

.glabel text { font-size: 12.6px; fill: #f4f5f8; }
.gval { font-size: 33.5px; fill: #56a64b; letter-spacing: 0; }
.gname { font-size: 18px; fill: #fff; letter-spacing: 0; }
.axis path { fill: none; stroke: #c8dcf0; stroke-opacity: .13; stroke-width: 1; }
.tick { font-size: 10.8px; fill: #c0c5d0; letter-spacing: 0; }

.cores { padding: 7px 0 0 11px; display: flex; flex-direction: column; gap: 2px; }
.core { display: flex; height: 11px; align-items: center; font-size: 10.8px; letter-spacing: 0; line-height: 11px; }
.core i { width: 9.1px; height: 11px; margin-right: 1.69px; border-radius: 1.5px; flex: none; }
.core i.lit { background: radial-gradient(circle, #6fbb69, #57995a); }
.cname { width: 39px; }
.cval { margin-left: auto; margin-right: 25px; color: #64ac60; }

.temps { display: flex; gap: 9.4px; padding: 5px 8px 0 7px; }
.temp { flex: 1; text-align: center; }
.tval { height: 24px; line-height: 22px; font-size: 17.3px; letter-spacing: 0; white-space: nowrap; }
.tval small { font-size: 14px; margin-left: -1px; }
.tbar { height: 146px; background: #2b3a4b; border-radius: 3px; display: flex; align-items: flex-end; overflow: hidden; }
.tbar i { width: 100%; border-radius: 3px; }
.tname { font-size: 12.2px; line-height: 18px; letter-spacing: 0; }

.pie { display: flex; align-items: flex-start; }
.plabel { font-size: 11px; fill: #c9cdd8; }
.legend { padding-top: 6px; font-size: 11px; letter-spacing: 0; color: #e6e8ee; }
.w158 { width: 158px; } .w203 { width: 203px; }
.lrow { display: flex; align-items: center; height: 20.8px; padding-left: 7px; border-top: 1px solid #2a3b4b; }
.lrow.lhead { border-top: 0; color: #6097f0; height: 21px; }
.lrow.last:last-child { border-bottom: 1px solid #2a3b4b; height: 21.5px; }
.lrow b { font-weight: 500; text-align: right; }
.lrow i { width: 13px; height: 4px; border-radius: 1px; margin-right: 7px; flex: none; }
.lrow span { flex: 1; white-space: nowrap; }
.lrow em { text-align: right; }
.lrow .pct { width: 52px; margin-right: 7px; }

.menu { position: relative; }
.menu svg { position: absolute; right: -13px; top: 8px; }
.mapbody { padding: 7px; }
.map { position: relative; width: 808px; height: 324px; overflow: hidden; font-family: "Liberation Sans", Arial, sans-serif; letter-spacing: 0; }
.mlabel { font: 700 6.8px "Open Sans", sans-serif; fill: #646464; letter-spacing: .2px; }
.slabel { font: 600 7px "Open Sans", sans-serif; fill: #616161; stroke: #2c2c2c; stroke-width: 1px; paint-order: stroke; letter-spacing: .6px; }
.zoomctl { position: absolute; left: 10px; top: 10px; width: 27px; height: 54px; background: #fff; border-radius: 2px; color: #000; }
.zoomctl span { display: block; height: 27px; line-height: 27px; text-align: center; font-size: 19px; font-weight: 700; }
.zoomctl span:first-child { border-bottom: 1px solid #ccc; line-height: 26px; }
.mlegend { position: absolute; left: 9px; top: 191px; width: 109px; height: 124px; padding: 5px 7px; background: rgba(255, 255, 255, .8); border-radius: 4px; box-shadow: 0 0 13px rgba(0, 0, 0, .2); color: #555; font-size: 12.6px; }
.mlegend div { display: flex; align-items: center; height: 16.3px; }
.mlegend i { width: 17px; height: 16.3px; margin-right: 7px; opacity: .7; }
.attrib { position: absolute; right: 0; bottom: 0; width: 182px; height: 15px; line-height: 14px; padding-left: 5px; background: rgba(255, 255, 255, .7); color: #333; font-size: 10px; white-space: nowrap; }
.attrib a { color: #0078a8; }
.resize { position: absolute; right: 2px; bottom: 2px; width: 5px; height: 5px; border-right: 1px solid #6d7680; border-bottom: 1px solid #6d7680; }
.evcount { font-size: 21px; font-weight: 500; fill: #8f3bb8; letter-spacing: 0; }

.glegend { position: relative; flex: 1; margin: 0 10px 0 12px; padding-top: 3px; font-size: 11px; letter-spacing: 0; color: #f0f1f5; }
.grow { display: flex; align-items: center; height: 20px; margin-bottom: 3px; padding: 0 0 3px 1px; }
.grow.ghead { padding-bottom: 0; margin-bottom: 2.5px; }
.grow span { flex: 1; color: #c0c5d0; }
.grow i { width: 13px; height: 3px; margin: 4px 9px 0 0; }
.grow i.env { background: #7eb26d; }
.grow i.rcv { background: #eab839; height: 4px; }
.grow.alt { background: #22252b; }
.grow b { color: #33a2e5; font-weight: 700; padding-right: 7.5px; }
.grow b, .grow em { text-align: right; white-space: nowrap; flex: none; }
.v1 { width: 90px; } .v2 { width: 74px; } .v3 { width: 68px; margin-right: 2px; }
.four .v0 { width: 50px; } .four .v1 { width: 58.5px; } .four .v2 { width: 56px; } .four .v3 { width: 48.5px; }
.gscroll { position: absolute; right: -2px; top: 8px; width: 5px; height: 52px; border-radius: 3px; background: #2b659f; }

.stats { display: flex; flex-direction: column; }
.stat { height: 102px; display: flex; align-items: center; justify-content: space-between; padding: 0 11px 0 11px; letter-spacing: 0; }
.stat span { font-size: 18px; padding-bottom: 1px; }
.stat strong { font-size: 35.5px; font-weight: 500; color: #73bf69; padding-bottom: 3px; }
.stat small { font-size: 21.5px; margin-left: 6px; }
.bname { font-size: 24.1px; fill: #fff; letter-spacing: 0; }
.bval { font-size: 30.8px; font-weight: 500; fill: #73bf69; letter-spacing: 0; }
.bunit { font-size: 18px; }

.collapsed { display: flex; align-items: center; flex: none; height: 27px; width: 2488px; margin: 7px 0 0 14px; padding: 0 4px 0 4px; background: #181b1f; font-size: 14.7px; font-weight: 500; letter-spacing: 0; }
.collapsed span { margin-left: 5px; }
.collapsed em { margin-left: 15px; font-style: italic; font-weight: 400; font-size: 11px; color: #74767d; }
.grip { margin-left: auto; display: grid; grid-template-columns: 2px 2px; gap: 3px 3px; }
.grip i { width: 2px; height: 2px; background: #45474c; }
.edge { margin-top: 3px; height: 2px; flex: none; background: #05070a; }
.pagescroll { position: absolute; left: 2510px; top: 50px; width: 5px; height: 1084px; border-radius: 3px; background: #2b649d; }
</style>
